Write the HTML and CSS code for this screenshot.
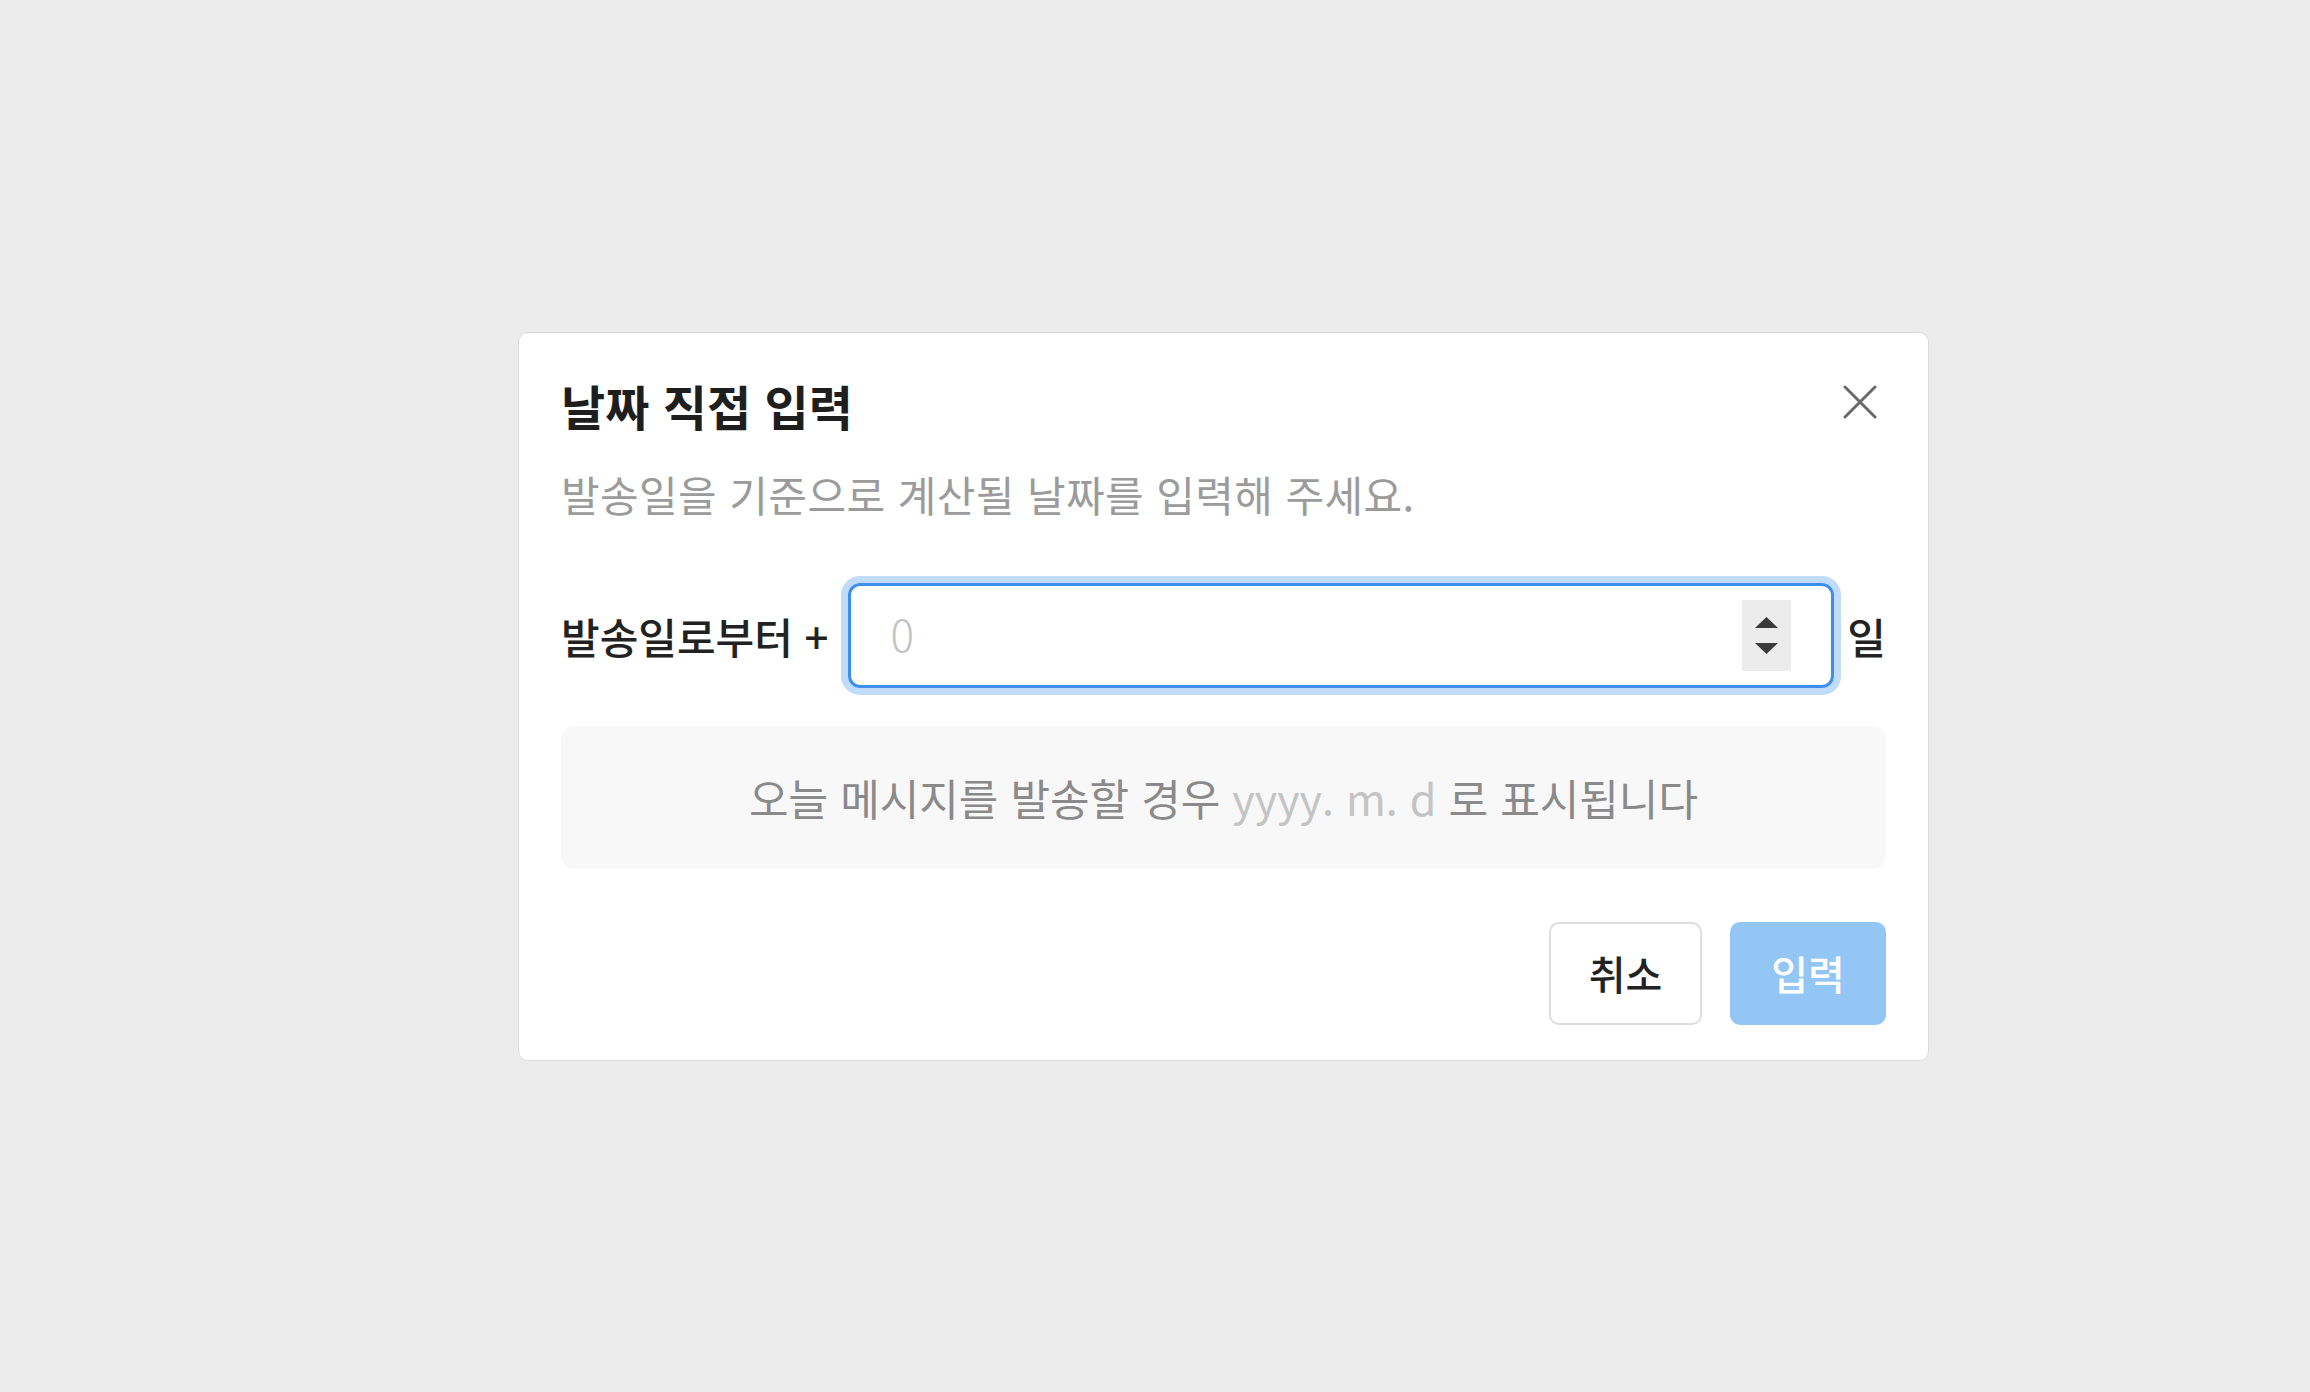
FILE: index.html
```html
<!DOCTYPE html>
<html lang="ko">
<head>
    <meta charset="utf-8">
    <title>날짜 직접 입력</title>
    <link rel="stylesheet" href="styles.css">
</head>
<body>

<div class="screen">
    <div class="dialog">
        <div class="dialog-head">
            <h2 class="dialog-title">날짜 직접 입력</h2>
            <button class="close-btn" type="button" aria-label="닫기">
                <svg width="34" height="34" viewBox="0 0 34 34">
                    <path d="M2 2 L32 32 M32 2 L2 32" stroke="#6a6a6a" stroke-width="3" stroke-linecap="round" fill="none"/>
                </svg>
            </button>
        </div>
        <p class="dialog-desc">발송일을 기준으로 계산될 날짜를 입력해 주세요.</p>

        <div class="offset-row">
            <label class="offset-label" for="days">발송일로부터 +</label>
            <div class="num-field">
                <input type="number" id="days" placeholder="0">
                <div class="spin">
                    <svg width="23" height="11" viewBox="0 0 23 11"><path d="M11.5 0 L23 11 L0 11 Z" fill="#3a3a3a"/></svg>
                    <svg width="23" height="11" viewBox="0 0 23 11"><path d="M0 0 L23 0 L11.5 11 Z" fill="#3a3a3a"/></svg>
                </div>
            </div>
            <span class="offset-unit">일</span>
        </div>

        <p class="preview">오늘 메시지를 발송할 경우 <span class="preview-date">yyyy. m. d</span> 로 표시됩니다</p>

        <div class="dialog-actions">
            <button class="btn btn-cancel" type="button">취소</button>
            <button class="btn btn-submit" type="button">입력</button>
        </div>
    </div>
</div>

</body>
</html>
```

FILE: styles.css
```css
body {
    margin: 0;
    padding: 0;
    background-color: #ececec;
    font-family: "Noto Sans CJK KR", "Noto Sans", sans-serif;
    color: #222;
}
.screen {
    height: 100vh;
    padding-left: 137px;
    box-sizing: border-box;
    display: flex;
    align-items: center;
    justify-content: center;
}
.dialog {
    width: 1411px;
    box-sizing: border-box;
    background: #fff;
    border: 1px solid #dcdcdc;
    border-radius: 10px;
    padding: 43px 42px 35px 42px;
}
.dialog-head {
    display: flex;
    justify-content: space-between;
    align-items: flex-start;
}
.dialog-title {
    margin: 0;
    font-size: 48px;
    line-height: 58px;
    font-weight: 700;
    color: #1e1e1e;
}
.close-btn {
    width: 52px;
    height: 52px;
    padding: 0;
    border: none;
    background: none;
    display: flex;
    align-items: center;
    justify-content: center;
}
.dialog-desc {
    margin: 33px 0 0 0;
    font-size: 42px;
    line-height: 54px;
    letter-spacing: 0.4px;
    color: #9b9b9b;
}
.offset-row {
    margin-top: 62px;
    display: flex;
    align-items: center;
    gap: 13px;
}
.offset-label, .offset-unit {
    font-size: 42px;
    font-weight: 500;
    color: #222;
    white-space: nowrap;
}
.offset-label {
    margin-right: 6px;
}
.num-field {
    flex: 1;
    height: 105px;
    box-sizing: border-box;
    border: 3px solid #3e8ef0;
    border-radius: 12px;
    box-shadow: 0 0 0 7px #c1dcfa;
    display: flex;
    align-items: center;
    padding: 0 40px 0 40px;
}
.num-field input {
    flex: 1;
    min-width: 0;
    border: none;
    outline: none;
    padding: 0 0 4px 0;
    font-family: "Noto Sans CJK KR", "Noto Sans", sans-serif;
    font-size: 44px;
    font-weight: 300;
    color: #222;
    background: transparent;
    -moz-appearance: textfield;
}
.num-field input::placeholder {
    color: #c4c4c4;
}
.num-field input::-webkit-inner-spin-button,
.num-field input::-webkit-outer-spin-button {
    -webkit-appearance: none;
    margin: 0;
}
.spin {
    width: 49px;
    height: 71px;
    background: #ececec;
    display: flex;
    flex-direction: column;
    align-items: center;
    justify-content: center;
    gap: 15px;
}
.preview {
    margin: 38px 0 0 0;
    height: 143px;
    line-height: 143px;
    border-radius: 14px;
    background: #f8f8f8;
    text-align: center;
    font-size: 43px;
    color: #8a8a8a;
    white-space: nowrap;
}
.preview-date {
    color: #c4c4c4;
}
.dialog-actions {
    margin-top: 53px;
    display: flex;
    justify-content: flex-end;
    gap: 28px;
}
.btn {
    height: 103px;
    border-radius: 10px;
    font-family: "Noto Sans CJK KR", "Noto Sans", sans-serif;
    font-size: 40px;
    font-weight: 500;
    padding: 0;
}
.btn-cancel {
    width: 153px;
    background: #fff;
    border: 2px solid #dedede;
    color: #222;
}
.btn-submit {
    width: 156px;
    background: #93c5f5;
    border: none;
    color: #fff;
}
```
